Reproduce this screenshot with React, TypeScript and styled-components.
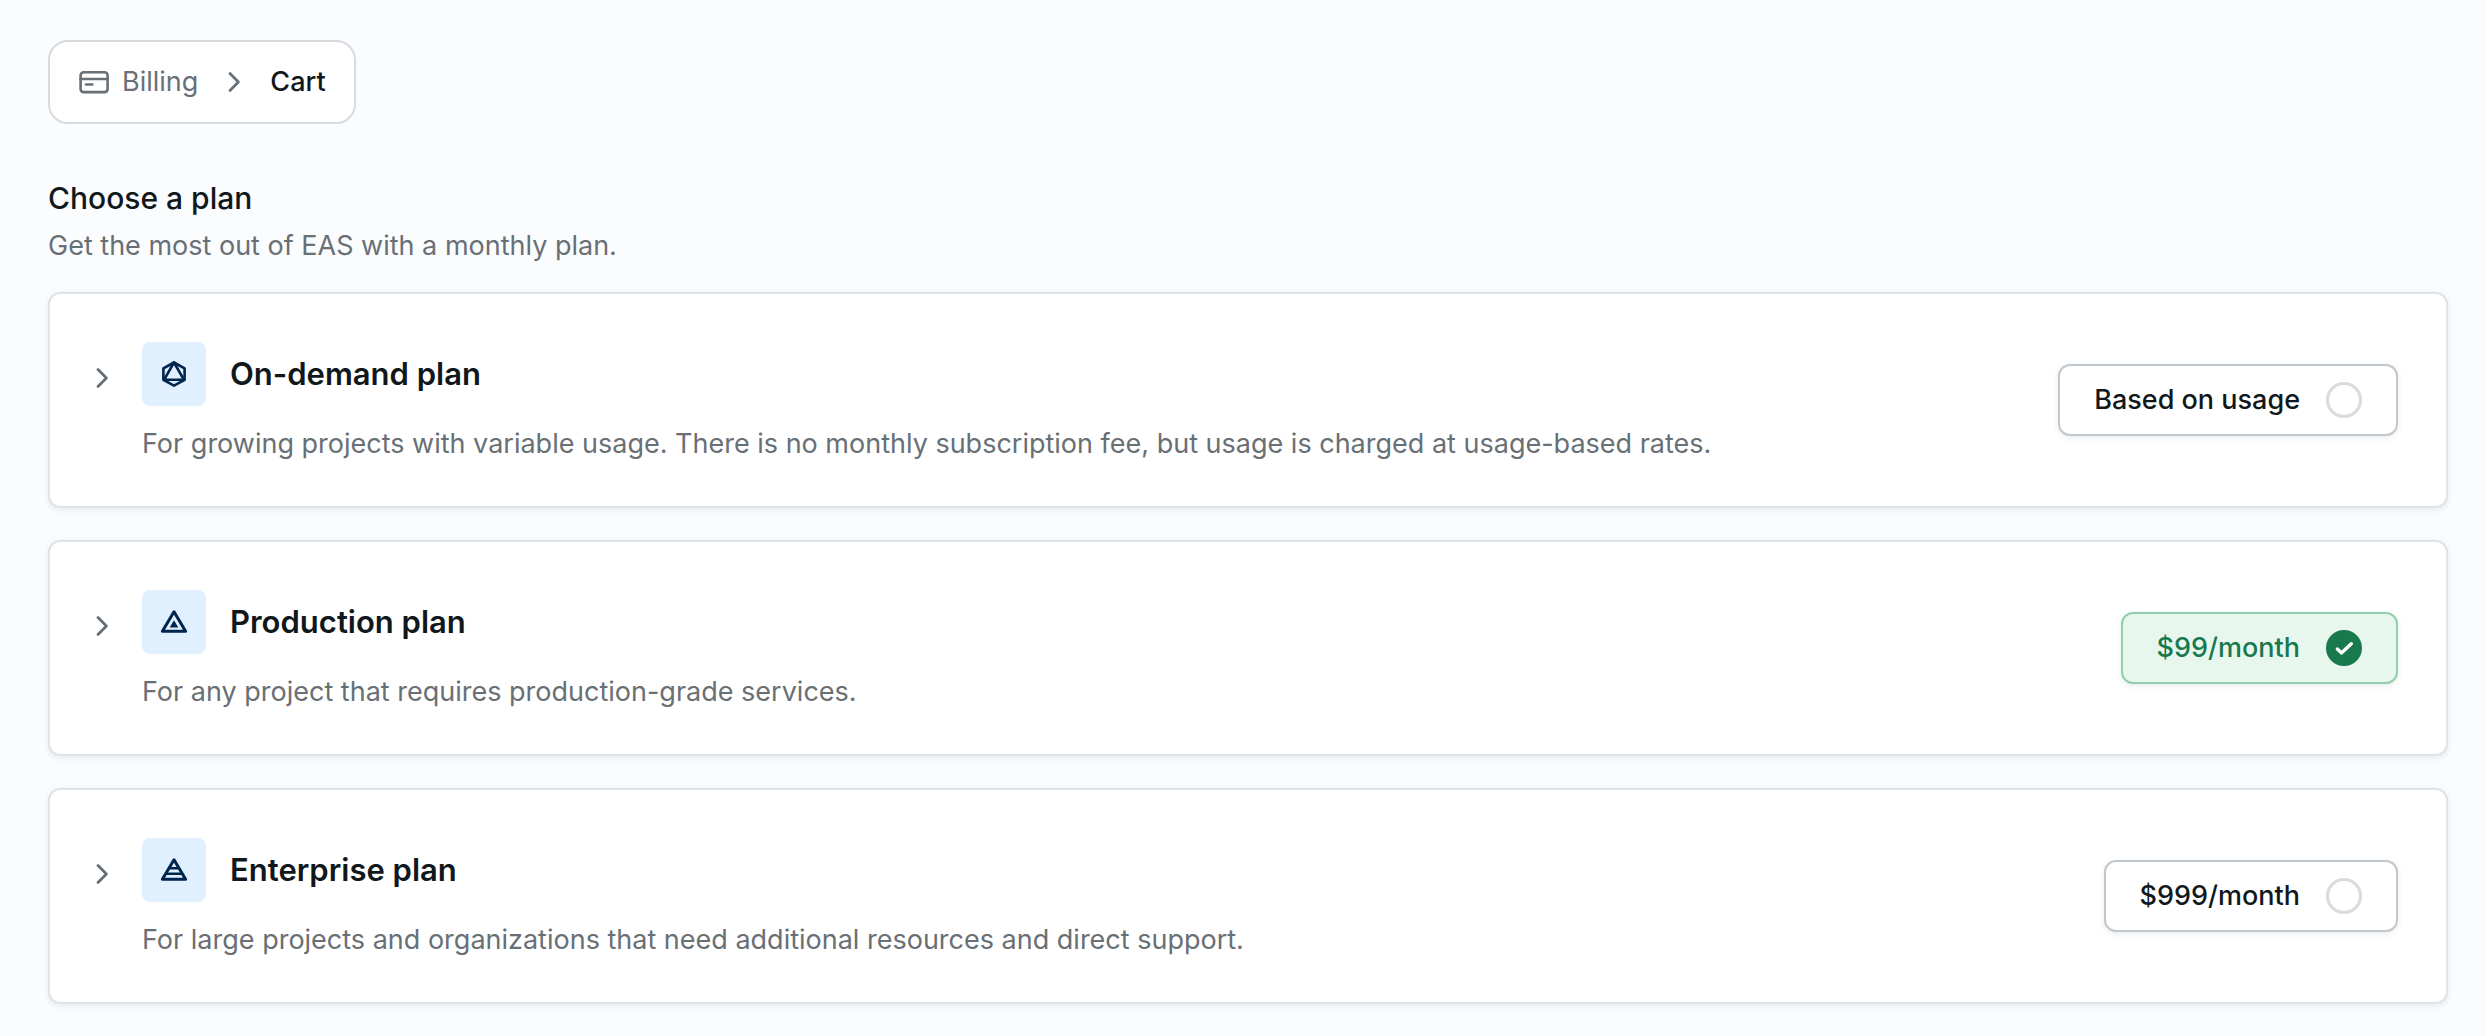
import React, { useState } from 'react';
import styled, { createGlobalStyle } from 'styled-components';

const GlobalStyle = createGlobalStyle`
  *, *::before, *::after { box-sizing: border-box; }
  body {
    margin: 0;
    background: #fbfcfe;
    color: #11181c;
    font-family: Inter, "Liberation Sans", sans-serif;
    font-size: 27px;
    line-height: 44px;
    -webkit-font-smoothing: antialiased;
  }
`;

const Page = styled.main`
  padding: 40px 38px 32px 48px;
`;

const Breadcrumb = styled.nav`
  display: flex;
  align-items: center;
  gap: 20px;
  width: fit-content;
  padding: 18px 28px;
  border: 2px solid #d7dbdf;
  border-radius: 20px;
  background: #fff;
`;

const CrumbLink = styled.a`
  display: inline-flex;
  align-items: center;
  gap: 12px;
  color: #687076;
  text-decoration: none;
`;

const CurrentCrumb = styled.span`
  font-weight: 500;
`;

const Icon = styled.svg<{ $size?: number }>`
  display: block;
  flex: none;
  width: ${({ $size = 32 }) => $size}px;
  height: ${({ $size = 32 }) => $size}px;
`;

const Section = styled.section`
  margin-top: 52px;
`;

const SectionTitle = styled.h1`
  margin: 0 0 4px;
  font-size: 30px;
  font-weight: 500;
  line-height: 44px;
`;

const Muted = styled.p`
  margin: 0;
  color: #687076;
`;

const PlanList = styled.div`
  display: grid;
  gap: 32px;
  margin-top: 24px;
`;

const PlanCard = styled.article`
  display: flex;
  align-items: center;
  gap: 48px;
  padding: 48px 48px 40px 36px;
  border: 2px solid #dfe3e6;
  border-radius: 12px;
  background: #fff;
  box-shadow: 0 2px 6px rgba(0, 0, 0, 0.08);
`;

const PlanInfo = styled.div`
  display: grid;
  flex: 1;
  grid-template-columns: 32px 1fr;
  column-gap: 24px;
  row-gap: 16px;
  align-items: center;
`;

const ExpandButton = styled.button`
  display: grid;
  place-items: center;
  padding: 8px 0 0;
  border: 0;
  background: none;
  color: #687076;
  cursor: pointer;
`;

const PlanHeading = styled.div`
  display: flex;
  align-items: center;
  gap: 24px;
`;

const PlanBadge = styled.span`
  display: grid;
  place-items: center;
  width: 64px;
  height: 64px;
  border-radius: 8px;
  background: #e1f0ff;
  color: #00254d;
`;

const PlanName = styled.h2`
  margin: 0;
  font-size: 31px;
  font-weight: 600;
  line-height: 44px;
`;

const PlanDescription = styled(Muted)`
  grid-column: 2;
`;

const PriceOption = styled.label<{ $selected: boolean }>`
  display: flex;
  align-items: center;
  gap: 26px;
  margin-bottom: 8px;
  padding: 12px 34px;
  border: 2px solid ${({ $selected }) => ($selected ? '#92ceac' : '#c1c8cd')};
  border-radius: 12px;
  background: ${({ $selected }) => ($selected ? '#e8f7ee' : '#fff')};
  color: ${({ $selected }) => ($selected ? '#18794e' : 'inherit')};
  box-shadow: 0 2px 6px rgba(0, 0, 0, 0.08);
  font-weight: 500;
  white-space: nowrap;
  cursor: pointer;
`;

const RadioMark = styled.span`
  display: grid;
  place-items: center;
  color: #fff;

  > * { grid-area: 1 / 1; }
  > svg { pointer-events: none; }
`;

const Radio = styled.input`
  appearance: none;
  width: 36px;
  height: 36px;
  margin: 0;
  border: 3px solid #d7dbdf;
  border-radius: 50%;
  background: #fff;
  cursor: pointer;

  &:checked {
    border-color: #18794e;
    background: #18794e;
  }
`;

function CardIcon() {
  return (
    <Icon viewBox="0 0 32 32" fill="none" stroke="currentColor" strokeWidth="2.6" strokeLinecap="round" strokeLinejoin="round" aria-hidden="true">
      <rect x="2.6" y="6.3" width="27" height="19.8" rx="3" />
      <path d="M2.6 13h27M8 18.5h6.4" />
    </Icon>
  );
}

function Chevron() {
  return (
    <Icon viewBox="0 0 32 32" fill="none" stroke="#687076" strokeWidth="2.8" strokeLinecap="round" strokeLinejoin="round" aria-hidden="true">
      <path d="M12 7.6l8.4 8.4-8.4 8.4" />
    </Icon>
  );
}

function OnDemandIcon() {
  return (
    <Icon viewBox="0 0 32 32" fill="none" stroke="currentColor" strokeWidth="2.6" strokeLinejoin="round" aria-hidden="true">
      <path d="M16 4.5l10.6 5.9v11.4L16 27.6 5.4 21.8V10.4z" />
      <path d="M16 4.5L6 21.8h20z" />
    </Icon>
  );
}

function ProductionIcon() {
  return (
    <Icon viewBox="0 0 32 32" fill="none" stroke="currentColor" strokeWidth="3" strokeLinejoin="round" aria-hidden="true">
      <path d="M16 5.8L4.4 25.3h23.2z" />
      <path d="M16 14.2l-4.3 7.2h8.6z" fill="currentColor" stroke="none" />
    </Icon>
  );
}

function EnterpriseIcon() {
  return (
    <Icon viewBox="0 0 32 32" fill="none" stroke="currentColor" strokeWidth="3" strokeLinejoin="round" aria-hidden="true">
      <path d="M16 5.8L4.4 25.3h23.2z" />
      <path d="M12 14.2h8M8.5 19.8h15" strokeWidth="2.4" />
    </Icon>
  );
}

function CheckIcon() {
  return (
    <Icon $size={36} viewBox="0 0 36 36" fill="none" stroke="currentColor" strokeWidth="3.4" strokeLinecap="round" strokeLinejoin="round" aria-hidden="true">
      <path d="M11.4 19l4 3.9 9.9-9.2" />
    </Icon>
  );
}

const plans = [
  {
    id: 'on-demand',
    name: 'On-demand plan',
    description:
      'For growing projects with variable usage. There is no monthly subscription fee, but usage is charged at usage-based rates.',
    price: 'Based on usage',
    Symbol: OnDemandIcon,
  },
  {
    id: 'production',
    name: 'Production plan',
    description: 'For any project that requires production-grade services.',
    price: '$99/month',
    Symbol: ProductionIcon,
  },
  {
    id: 'enterprise',
    name: 'Enterprise plan',
    description: 'For large projects and organizations that need additional resources and direct support.',
    price: '$999/month',
    Symbol: EnterpriseIcon,
  },
];

export default function App() {
  const [selected, setSelected] = useState('production');

  return (
    <>
      <GlobalStyle />
      <Page>
        <Breadcrumb aria-label="Breadcrumb">
          <CrumbLink href="#billing">
            <CardIcon />
            Billing
          </CrumbLink>
          <Chevron />
          <CurrentCrumb aria-current="page">Cart</CurrentCrumb>
        </Breadcrumb>

        <Section>
          <SectionTitle>Choose a plan</SectionTitle>
          <Muted>Get the most out of EAS with a monthly plan.</Muted>
          <PlanList>
            {plans.map(({ id, name, description, price, Symbol }) => (
              <PlanCard key={id}>
                <PlanInfo>
                  <ExpandButton type="button" aria-label={`Show ${name} details`}>
                    <Chevron />
                  </ExpandButton>
                  <PlanHeading>
                    <PlanBadge>
                      <Symbol />
                    </PlanBadge>
                    <PlanName>{name}</PlanName>
                  </PlanHeading>
                  <PlanDescription>{description}</PlanDescription>
                </PlanInfo>
                <PriceOption $selected={selected === id} htmlFor={id}>
                  {price}
                  <RadioMark>
                    <Radio
                      type="radio"
                      name="plan"
                      id={id}
                      checked={selected === id}
                      onChange={() => setSelected(id)}
                    />
                    {selected === id && <CheckIcon />}
                  </RadioMark>
                </PriceOption>
              </PlanCard>
            ))}
          </PlanList>
        </Section>
      </Page>
    </>
  );
}
